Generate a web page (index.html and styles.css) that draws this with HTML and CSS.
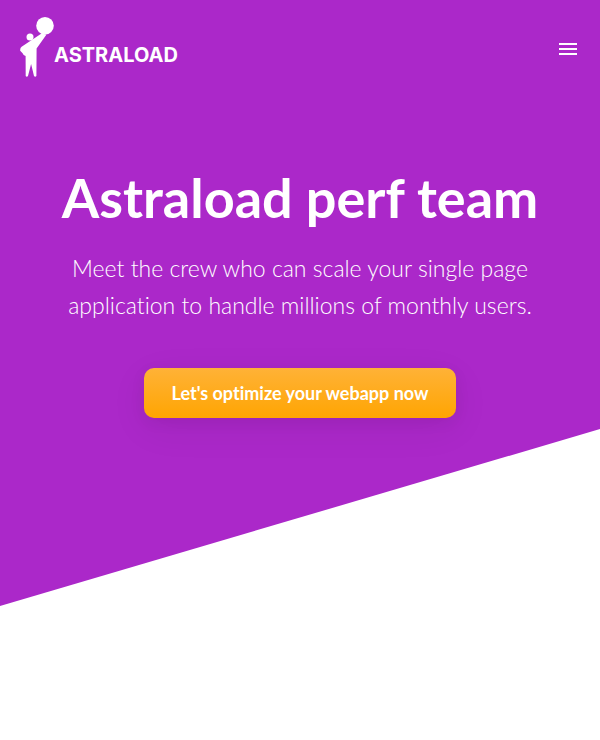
FILE: index.html
```
<!DOCTYPE html>
<html lang="en">
<head>
  <meta charset="utf-8">
  <meta name="viewport" content="width=device-width, initial-scale=1">
  <title>Astraload perf team</title>
  <link rel="stylesheet" href="styles.css">
</head>
<body>
  <div class="hero">
    <header class="header">
      <a class="logo" href="#">
        <svg class="logo-mark" viewBox="20 17 34 60" aria-hidden="true">
          <circle cx="45" cy="25.8" r="8.8"/>
          <circle cx="30" cy="36.9" r="3.5"/>
          <path d="M41.5 33.5 L46.5 34.5 L36.6 48.5 L36.4 76 Q35.2 77.4 34 76 L31.1 64 L28 76 Q26.8 77.4 25.7 76 L25.6 56 Q23.2 55.2 22.6 53.3 L20.2 50.7 Q20 48 21.6 46.8 Z"/>
        </svg>
        <span class="logo-text">ASTRALOAD</span>
      </a>
      <button class="menu" type="button" aria-label="Menu">
        <svg class="menu-icon" viewBox="0 0 24 24" aria-hidden="true">
          <path d="M3 18h18v-2H3v2zm0-5h18v-2H3v2zm0-7v2h18V6H3z"/>
        </svg>
      </button>
    </header>
    <main class="intro">
      <h1 class="title">Astraload perf team</h1>
      <p class="lead">Meet the crew who can scale your single page application to handle millions of monthly users.</p>
      <a class="cta" href="#">Let's optimize your webapp now</a>
    </main>
  </div>
</body>
</html>
```

FILE: styles.css
```
* {
  box-sizing: border-box;
}

body {
  margin: 0;
  background: #fff;
  color: #fff;
  font-family: Lato, sans-serif;
  font-variant-ligatures: none;
}

.hero {
  padding-bottom: 188px;
  background: #ab28c9;
  clip-path: polygon(0 0, 100% 0, 100% calc(100% - 29.5vw), 0 100%);
}

.header {
  display: flex;
  align-items: flex-end;
  justify-content: space-between;
  padding: 17px 20px 20px;
}

.logo {
  display: flex;
  align-items: center;
  color: inherit;
  text-decoration: none;
}

.logo-mark {
  width: 34px;
  height: 60px;
  fill: #fff;
}

.logo-text {
  padding-top: 16px;
  font: 700 20px/24px Inter, sans-serif;
}

.menu {
  display: flex;
  padding: 16px 0;
  border: 0;
  background: none;
  color: inherit;
  cursor: pointer;
}

.menu-icon {
  width: 24px;
  height: 24px;
  fill: #fff;
}

.intro {
  padding: 65px 48px 0;
  text-align: center;
}

.title {
  margin: 0 0 16px;
  font-size: 54px;
  font-weight: 700;
  line-height: 72px;
}

.lead {
  max-width: 480px;
  margin: 0 auto 44px;
  font-size: 23px;
  font-weight: 300;
  line-height: 37px;
}

.cta {
  display: inline-block;
  padding: 0 28px;
  border-radius: 10px;
  background: linear-gradient(#ffb237, #ffa502);
  box-shadow: 0 10px 40px rgba(0, 0, 0, 0.06), 0 4px 16px rgba(0, 0, 0, 0.06);
  color: inherit;
  font-size: 18px;
  font-weight: 700;
  line-height: 50px;
  text-decoration: none;
  vertical-align: top;
}
```
